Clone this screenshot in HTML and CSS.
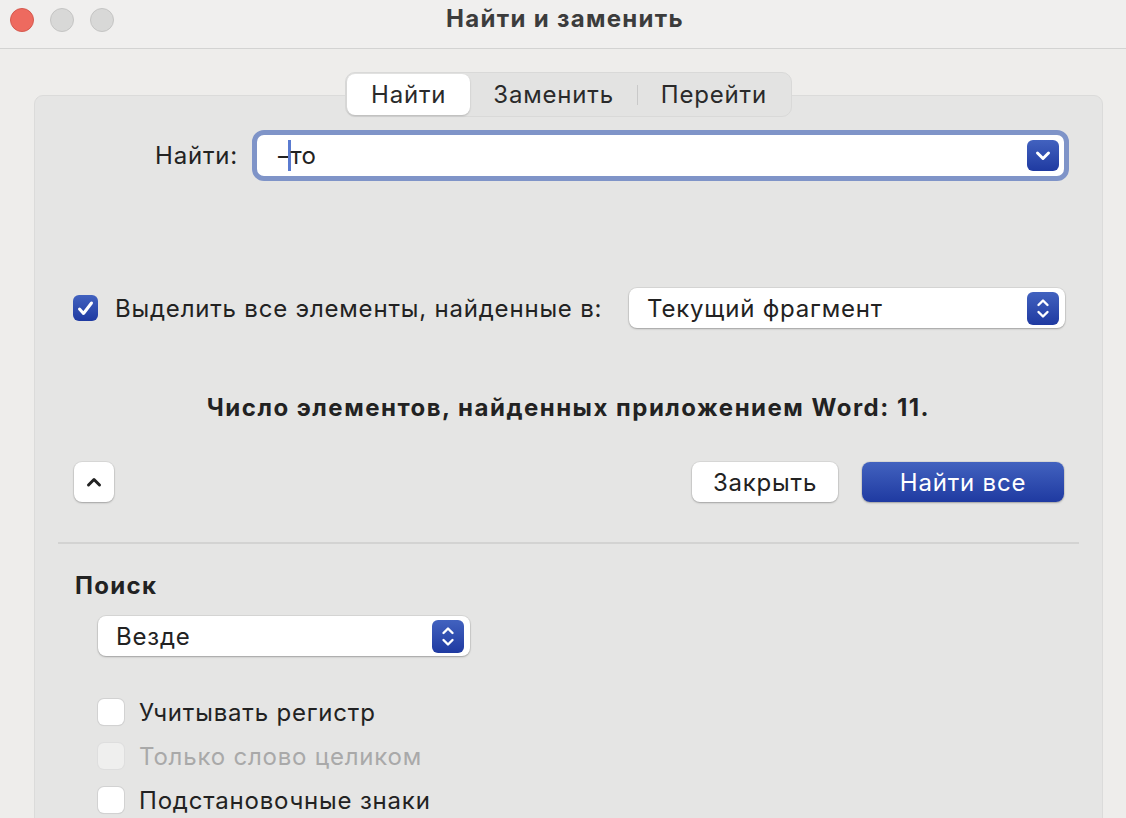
FILE: index.html
```html
<!DOCTYPE html>
<html lang="ru">
<head>
    <meta charset="UTF-8">
    <title>Найти и заменить</title>
    <link rel="stylesheet" href="styles.css">
</head>
<body>
    <div class="titlebar">
        <div class="lights">
            <span class="light red"></span>
            <span class="light"></span>
            <span class="light"></span>
        </div>
        <div class="title">Найти и заменить</div>
        <div></div>
    </div>

    <div class="window">
        <div class="tabs">
            <div class="tab active">Найти</div>
            <div class="tab">Заменить</div>
            <span class="tab-sep"></span>
            <div class="tab">Перейти</div>
        </div>

        <div class="panel">
            <div class="find-row">
                <label class="find-label">Найти:</label>
                <div class="find-input">
                    <div class="find-text">–<span class="caret"></span>то</div>
                    <span class="blue-btn drop">
                        <svg width="32" height="31" viewBox="0 0 32 31"><polyline points="10.5,13 16,18.5 21.5,13" fill="none" stroke="#fff" stroke-width="3" stroke-linecap="round" stroke-linejoin="round"/></svg>
                    </span>
                </div>
            </div>

            <div class="highlight-row">
                <span class="check checked">
                    <svg width="25" height="25" viewBox="0 0 25 25"><polyline points="6.5,13 10.5,17.5 18.5,7" fill="none" stroke="#fff" stroke-width="3" stroke-linecap="round" stroke-linejoin="round"/></svg>
                </span>
                <span class="highlight-label">Выделить все элементы, найденные в:</span>
                <div class="select select-wide">
                    <span>Текущий фрагмент</span>
                    <span class="blue-btn stepper">
                        <svg width="32" height="33" viewBox="0 0 32 33"><polyline points="11.5,13 16,8.5 20.5,13" fill="none" stroke="#fff" stroke-width="2.4" stroke-linecap="round" stroke-linejoin="round"/><polyline points="11.5,20 16,24.5 20.5,20" fill="none" stroke="#fff" stroke-width="2.4" stroke-linecap="round" stroke-linejoin="round"/></svg>
                    </span>
                </div>
            </div>

            <p class="count">Число элементов, найденных приложением Word: 11.</p>

            <div class="button-row">
                <button class="icon-btn">
                    <svg width="20" height="20" viewBox="0 0 20 20"><polyline points="4.5,13 10,7.5 15.5,13" fill="none" stroke="#222" stroke-width="3" stroke-linecap="round" stroke-linejoin="round"/></svg>
                </button>
                <div class="actions">
                    <button class="btn">Закрыть</button>
                    <button class="btn primary">Найти все</button>
                </div>
            </div>

            <hr class="divider">

            <h3 class="section-title">Поиск</h3>
            <div class="select select-narrow">
                <span>Везде</span>
                <span class="blue-btn stepper">
                    <svg width="32" height="33" viewBox="0 0 32 33"><polyline points="11.5,13 16,8.5 20.5,13" fill="none" stroke="#fff" stroke-width="2.4" stroke-linecap="round" stroke-linejoin="round"/><polyline points="11.5,20 16,24.5 20.5,20" fill="none" stroke="#fff" stroke-width="2.4" stroke-linecap="round" stroke-linejoin="round"/></svg>
                </span>
            </div>

            <div class="options">
                <div class="option"><span class="check"></span>Учитывать регистр</div>
                <div class="option disabled"><span class="check"></span>Только слово целиком</div>
                <div class="option"><span class="check"></span>Подстановочные знаки</div>
            </div>
        </div>
    </div>
</body>
</html>
```

FILE: styles.css
```css
body {
    margin: 0;
    background-color: #eeedeb;
    font-family: Inter, "Noto Sans", sans-serif;
    font-size: 24px;
    letter-spacing: 0.8px;
    color: #222;
    height: 818px;
    overflow: hidden;
}

.titlebar {
    height: 48px;
    background-color: #f0efee;
    border-bottom: 1px solid #d3d3d2;
    display: grid;
    grid-template-columns: 1fr auto 1fr;
    align-items: center;
}

.lights {
    display: flex;
    gap: 16px;
    padding-left: 10px;
    margin-top: -8px;
}

.light {
    width: 22px;
    height: 22px;
    border-radius: 50%;
    background-color: #d8d8d7;
    border: 1px solid #c5c5c4;
}

.light.red {
    background-color: #ee6a5f;
    border-color: #d5594e;
}

.title {
    font-size: 24px;
    letter-spacing: 1.3px;
    font-weight: bold;
    color: #3c3c3c;
    margin: -12px 0 0 4px;
}

.window {
    padding: 23px 23px 0 34px;
}

.tabs {
    position: relative;
    z-index: 1;
    width: max-content;
    margin: 0 auto;
    display: flex;
    align-items: center;
    padding: 1px;
    background-color: #e3e3e2;
    border: 1px solid #d9d9d8;
    border-radius: 10px;
}

.tab {
    height: 41px;
    line-height: 41px;
    padding: 0 23px;
    color: #2a2a2a;
}

.tab.active {
    background-color: #fff;
    border-radius: 8px;
    box-shadow: 0 1px 2px rgba(0, 0, 0, 0.2);
    padding: 0 24px;
}

.tab-sep {
    width: 1px;
    height: 20px;
    background-color: #c9c9c9;
}

.panel {
    margin-top: -22px;
    height: 760px;
    background-color: #e5e5e4;
    border: 1px solid #dbdbda;
    border-radius: 9px;
    padding: 0 33px 0 0;
}

.find-row {
    display: flex;
    align-items: center;
    margin-top: 34px;
    padding-left: 120px;
}

.find-label {
    margin-right: 14px;
}

.find-input {
    flex: 1;
    height: 41px;
    border: 5px solid #7f94c8;
    border-radius: 12px;
    background-color: #fff;
    display: flex;
    align-items: center;
    padding: 0 5px 0 21px;
}

.find-text {
    flex: 1;
    display: flex;
    align-items: center;
    letter-spacing: 0.4px;
}

.caret {
    display: inline-block;
    width: 3px;
    height: 31px;
    background-color: #5a7bd0;
    margin: 0 -1px 0 -2px;
}

.blue-btn {
    display: flex;
    align-items: center;
    justify-content: center;
    border-radius: 6px;
    background: linear-gradient(#4262bf, #1f3aa1);
}

.drop {
    width: 32px;
    height: 31px;
}

.highlight-row {
    display: flex;
    align-items: center;
    margin-top: 107px;
    padding-left: 38px;
}

.check {
    width: 24px;
    height: 24px;
    border-radius: 6px;
    background-color: #fff;
    box-shadow: 0 0 0 1px #d2d2d2, 0 1px 1px rgba(0, 0, 0, 0.1);
    display: inline-flex;
    align-items: center;
    justify-content: center;
    flex-shrink: 0;
}

.check.checked {
    width: 25px;
    height: 26px;
    background: linear-gradient(#4262bf, #1f3aa1);
    box-shadow: none;
}

.highlight-label {
    margin-left: 17px;
}

.select {
    height: 40px;
    background-color: #fff;
    border-radius: 8px;
    box-shadow: 0 0 0 1px rgba(0, 0, 0, 0.06), 0 1px 2px rgba(0, 0, 0, 0.25);
    display: flex;
    align-items: center;
    justify-content: space-between;
    padding: 0 6px 0 18px;
    box-sizing: border-box;
}

.select-wide {
    width: 436px;
    margin-left: auto;
    margin-right: 4px;
}

.stepper {
    width: 32px;
    height: 33px;
}

.count {
    margin: 66px 0 0 0;
    line-height: 28px;
    text-align: center;
    font-size: 24px;
    letter-spacing: 1.5px;
    font-weight: bold;
    padding-left: 33px;
}

.button-row {
    display: flex;
    align-items: center;
    justify-content: space-between;
    margin-top: 40px;
    padding-left: 39px;
}

button {
    font-family: inherit;
    letter-spacing: inherit;
    border: none;
    cursor: pointer;
}

.icon-btn {
    width: 40px;
    height: 40px;
    border-radius: 8px;
    background-color: #fff;
    box-shadow: 0 0 0 1px rgba(0, 0, 0, 0.05), 0 1px 2px rgba(0, 0, 0, 0.25);
    display: flex;
    align-items: center;
    justify-content: center;
    padding: 0;
}

.actions {
    display: flex;
    gap: 24px;
    margin-right: 5px;
}

.btn {
    height: 40px;
    width: 146px;
    border-radius: 8px;
    background-color: #fff;
    box-shadow: 0 0 0 1px rgba(0, 0, 0, 0.05), 0 1px 2px rgba(0, 0, 0, 0.25);
    font-size: 24px;
    color: #222;
}

.btn.primary {
    width: 202px;
    background: linear-gradient(#4262bf, #1f3aa1);
    color: #fff;
}

.divider {
    border: none;
    height: 2px;
    background-color: #d3d3d2;
    margin: 40px -10px 0 23px;
}

.section-title {
    margin: 28px 0 0 40px;
    line-height: 28px;
    font-size: 24px;
    letter-spacing: 1.3px;
    font-weight: bold;
}

.select-narrow {
    width: 372px;
    margin: 16px 0 0 63px;
}

.options {
    margin: 34px 0 0 63px;
}

.option {
    display: flex;
    align-items: center;
    height: 44px;
}

.option .check {
    width: 26px;
    height: 26px;
    margin-right: 15px;
}

.option.disabled {
    color: #a9a9a9;
}

.option.disabled .check {
    background-color: #efefee;
    box-shadow: 0 0 0 1px #dedede;
}
```
